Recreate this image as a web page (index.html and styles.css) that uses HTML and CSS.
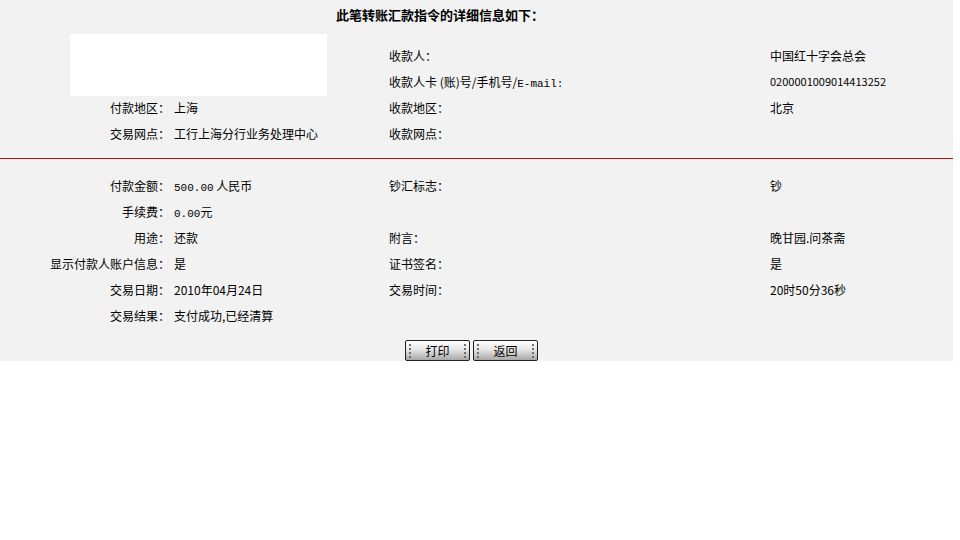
FILE: index.html
```html
<!DOCTYPE html>
<html lang="zh-CN">
<head>
    <meta charset="UTF-8">
    <title>转账汇款指令详细信息</title>
    <link rel="stylesheet" href="styles.css">
</head>
<body>

<div class="page">
    <div class="title">此笔转账汇款指令的详细信息如下：</div>

    <div class="grid top">
        <div class="blank"></div>
        <div class="label2">收款人：</div>
        <div class="value2">中国红十字会总会</div>
        <div class="label2">收款人卡 (账)号/手机号/<span class="mono">E-mail:</span></div>
        <div class="value2 small">0200001009014413252</div>

        <div class="label">付款地区：</div>
        <div class="value">上海</div>
        <div class="label2">收款地区：</div>
        <div class="value2">北京</div>

        <div class="label">交易网点：</div>
        <div class="value">工行上海分行业务处理中心</div>
        <div class="label2">收款网点：</div>
        <div class="value2"></div>
    </div>

    <div class="grid bottom">
        <div class="label">付款金额：</div>
        <div class="value"><span class="mono">500.00</span> 人民币</div>
        <div class="label2">钞汇标志：</div>
        <div class="value2">钞</div>

        <div class="label">手续费：</div>
        <div class="value"><span class="mono">0.00</span>元</div>
        <div class="label2"></div>
        <div class="value2"></div>

        <div class="label">用途：</div>
        <div class="value">还款</div>
        <div class="label2">附言：</div>
        <div class="value2">晚甘园.问茶斋</div>

        <div class="label">显示付款人账户信息：</div>
        <div class="value">是</div>
        <div class="label2">证书签名：</div>
        <div class="value2">是</div>

        <div class="label">交易日期：</div>
        <div class="value">2010年04月24日</div>
        <div class="label2">交易时间：</div>
        <div class="value2">20时50分36秒</div>

        <div class="label">交易结果：</div>
        <div class="value">支付成功,已经清算</div>
        <div class="label2"></div>
        <div class="value2"></div>
    </div>

    <div class="buttons">
        <button class="btn">打印</button>
        <button class="btn">返回</button>
    </div>
</div>

</body>
</html>
```

FILE: styles.css
```css
body {
    margin: 0;
    padding: 0;
    background-color: #ffffff;
    color: #000000;
    font-family: "Noto Sans CJK SC", "Liberation Sans", sans-serif;
    font-size: 12px;
}

.page {
    width: 953px;
    height: 361px;
    background-color: #f2f2f2;
}

.title {
    height: 30px;
    line-height: 30px;
    padding-left: 336px;
    font-size: 13px;
    font-weight: bold;
}

.grid {
    display: grid;
    grid-template-columns: 170px 219px 381px 1fr;
    grid-auto-rows: 26px;
    align-items: center;
}

.top {
    padding-top: 12px;
    padding-bottom: 12px;
    border-bottom: 1px solid #b81414;
}

.bottom {
    padding-top: 13px;
    padding-bottom: 12px;
}

.blank {
    grid-column: 1 / 3;
    grid-row: 1 / 3;
    align-self: stretch;
    margin: -8px 62px -2px 70px;
    background-color: #ffffff;
}

.label {
    text-align: right;
}

.value {
    padding-left: 4px;
}

.small {
    font-size: 11px;
}

.mono {
    font-family: "Liberation Mono", "DejaVu Sans Mono", monospace;
    font-size: 11px;
}

.buttons {
    display: flex;
    justify-content: center;
    gap: 3px;
    padding-right: 10px;
}

.btn {
    position: relative;
    width: 65px;
    height: 21px;
    padding: 0;
    border: 1px solid #222222;
    border-radius: 2px;
    background: linear-gradient(#ffffff, #e6e6e6 45%, #a8a8a8);
    font-family: "Noto Sans CJK SC", sans-serif;
    font-size: 12px;
    color: #000000;
    cursor: pointer;
}

.btn::before,
.btn::after {
    content: "";
    position: absolute;
    top: 3px;
    width: 2px;
    height: 14px;
    background: repeating-linear-gradient(#707070 0 2px, transparent 2px 4px);
}

.btn::before {
    left: 3px;
}

.btn::after {
    right: 3px;
}
```
